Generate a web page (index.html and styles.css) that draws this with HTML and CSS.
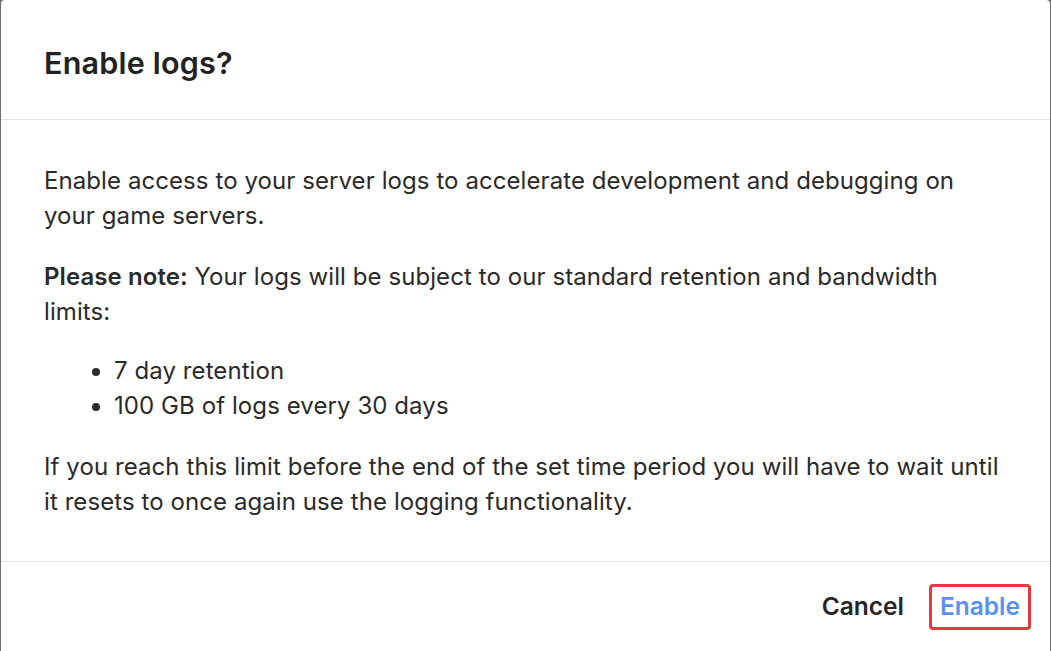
FILE: index.html
```html
<!DOCTYPE html>
<html lang="en">
<head>
    <meta charset="UTF-8"/>
    <title>Enable logs?</title>
    <link rel="stylesheet" href="styles.css">
</head>
<body>

<div class="modal">
    <div class="modal-header">
        <h2>Enable logs?</h2>
    </div>

    <div class="modal-body">
        <p>Enable access to your server logs to accelerate development and debugging on your game servers.</p>
        <p><b>Please note:</b> Your logs will be subject to our standard retention and bandwidth limits:</p>
        <ul>
            <li>7 day retention</li>
            <li>100 GB of logs every 30 days</li>
        </ul>
        <p>If you reach this limit before the end of the set time period you will have to wait until it resets to once again use the logging functionality.</p>
    </div>

    <div class="modal-footer">
        <button class="btn btn-cancel">Cancel</button>
        <button class="btn btn-enable">Enable</button>
    </div>
</div>

</body>
</html>
```

FILE: styles.css
```css
html, body {
  height: 100%;
}
body {
  margin: 0;
  background: #6e6e6e;
  font-family: Inter, "Noto Sans", sans-serif;
  color: #2a2a2a;
  overflow: hidden;
}
.modal {
  margin: 0 1px 0 1px;
  height: 100%;
  background: #fff;
  border-radius: 4px 4px 0 0;
  display: flex;
  flex-direction: column;
}
.modal-header {
  height: 120px;
  padding: 5px 43px 0 43px;
  display: flex;
  align-items: center;
  border-bottom: 1px solid #e3e3e3;
  box-sizing: border-box;
  flex-shrink: 0;
}
.modal-header h2 {
  margin: 0;
  font-size: 30.5px;
  font-weight: 600;
  letter-spacing: 0.2px;
  color: #222;
}
.modal-body {
  flex: 1;
  padding: 44px 46px 0 43px;
  font-size: 24px;
  line-height: 34.5px;
  letter-spacing: 0.08px;
  border-bottom: 1px solid #e3e3e3;
}
.modal-body p {
  margin: 0 0 27px 0;
}
.modal-body b {
  font-weight: 600;
}
.modal-body ul {
  margin: -2px 0 27px 0;
  padding-left: 70px;
}
.modal-footer {
  height: 89px;
  display: flex;
  align-items: center;
  justify-content: flex-end;
  gap: 14px;
  padding: 0 19px 0 20px;
  flex-shrink: 0;
}
.btn {
  font-family: inherit;
  font-size: 24.5px;
  font-weight: 600;
  line-height: 29px;
  background: none;
  border: 3px solid transparent;
  border-radius: 4px;
  padding: 5px 8px 6px 8px;
  cursor: pointer;
}
.btn-cancel {
  color: #262626;
}
.btn-enable {
  color: #5b91ee;
  border-color: #e5383f;
}
```
